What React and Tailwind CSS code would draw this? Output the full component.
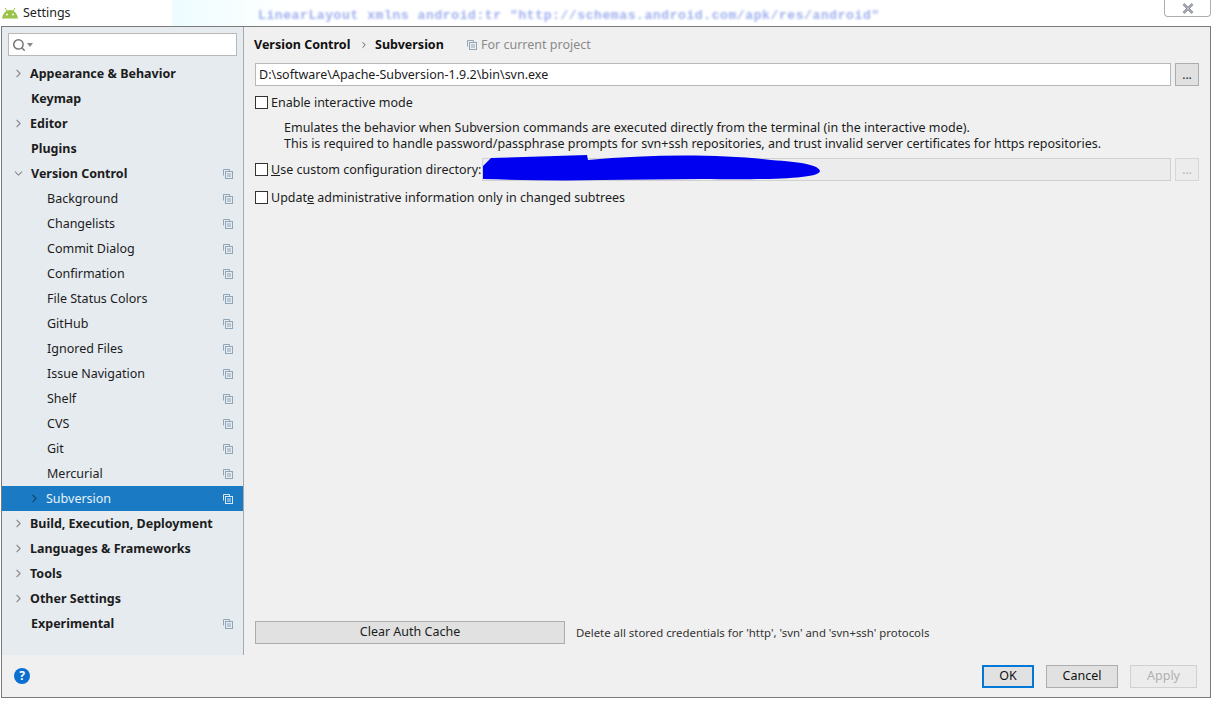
import { ChevronRight, ChevronDown, Search } from 'lucide-react';

const FONT = { fontFamily: '"Noto Sans", sans-serif' };

function CopyIcon({ light = false }) {
  const color = light ? '#dbe9f5' : '#8fa6b8';
  return (
    <svg width="10" height="10" viewBox="0 0 10 10" fill="none" stroke={color} strokeWidth="1">
      <path d="M0.5 6.5V0.5H6.5V2.5" />
      <rect x="2.5" y="2.5" width="7" height="7" />
      <path d="M4 5H8M4 7H8" />
    </svg>
  );
}

function Check({ children }) {
  return (
    <label className="flex items-center gap-[3px] whitespace-nowrap text-[12.5px] leading-[16px] text-[#1c1c1c]">
      <span className="h-[13px] w-[13px] shrink-0 border border-[#333] bg-white" />
      <span className="pt-[1px]">{children}</span>
    </label>
  );
}

function TreeRow({ label, bold, arrow, child, shared, selected }) {
  return (
    <div className={`flex h-[25px] items-center pr-[10px] text-[12.5px] ${selected ? 'bg-[#1a7bc4] text-[#e8f2fa]' : 'text-[#1c1c1c]'}`}>
      <span className={`flex shrink-0 items-center ${child ? 'w-[44px] pl-[26px]' : arrow ? 'w-[28px] pl-[10px]' : 'w-[29px]'}`}>
        {arrow === 'right' && <ChevronRight size={13} strokeWidth={2} className={selected ? 'text-[#14456b]' : 'text-[#8c8c8c]'} />}
        {arrow === 'down' && <ChevronDown size={13} strokeWidth={2} className="text-[#8c8c8c]" />}
      </span>
      <span className={`flex-1 whitespace-nowrap pt-[2px] ${bold ? 'font-bold' : ''} ${child && !selected ? 'pl-[1px]' : ''} ${arrow === 'down' ? 'pl-[1px]' : ''}`}>{label}</span>
      {shared && <CopyIcon light={selected} />}
    </div>
  );
}

const children = ['Background', 'Changelists', 'Commit Dialog', 'Confirmation', 'File Status Colors', 'GitHub', 'Ignored Files', 'Issue Navigation', 'Shelf', 'CVS', 'Git', 'Mercurial'];

function Sidebar() {
  return (
    <aside className="flex w-[242px] shrink-0 flex-col border-r border-[#a8a8a8] bg-[#e6ebf0]">
      <div className="mx-[6px] mt-[6px] mb-[5px] flex h-[23px] w-[229px] items-center gap-[1px] border border-[#b8b8b8] bg-white pl-[3px] text-[#777]">
        <Search size={14} strokeWidth={2.6} />
        <span className="h-0 w-0 border-x-[3px] border-t-[4px] border-x-transparent border-t-[#8a8a8a]" />
      </div>
      <TreeRow label="Appearance & Behavior" bold arrow="right" />
      <TreeRow label="Keymap" bold />
      <TreeRow label="Editor" bold arrow="right" />
      <TreeRow label="Plugins" bold />
      <TreeRow label="Version Control" bold arrow="down" shared />
      {children.map((name) => (
        <TreeRow key={name} label={name} child shared />
      ))}
      <TreeRow label="Subversion" child arrow="right" shared selected />
      <TreeRow label="Build, Execution, Deployment" bold arrow="right" />
      <TreeRow label="Languages & Frameworks" bold arrow="right" />
      <TreeRow label="Tools" bold arrow="right" />
      <TreeRow label="Other Settings" bold arrow="right" />
      <TreeRow label="Experimental" bold shared />
    </aside>
  );
}

function Browse({ disabled }) {
  return (
    <button className={`h-[23px] w-[24px] shrink-0 border text-[12px] leading-[14px] ${disabled ? 'border-[#d6d6d6] bg-[#ececec] text-[#b0b0b0]' : 'border-[#adadad] bg-[#e1e1e1] text-[#222]'}`}>
      ...
    </button>
  );
}

function Content() {
  return (
    <main className="flex min-w-0 flex-1 flex-col pl-[11px] pr-[11px] pb-[11px]">
      <div className="-ml-[1px] flex h-[36px] items-center text-[12.5px]">
        <span className="w-[101px] font-bold text-[#111]">Version Control</span>
        <ChevronRight size={10} className="mr-[6px] ml-[4px] text-[#444]" />
        <span className="w-[68px] font-bold text-[#111]">Subversion</span>
        <span className="ml-[24px] flex items-center gap-[4px] text-[#8a8a8a]">
          <CopyIcon />
          For current project
        </span>
      </div>
      <div className="flex gap-[4px]">
        <div className="flex h-[23px] flex-1 items-center border border-[#b8b8b8] bg-white px-[3px] pt-[1px] text-[12.5px] text-[#1c1c1c]">
          D:\software\Apache-Subversion-1.9.2\bin\svn.exe
        </div>
        <Browse />
      </div>
      <div className="mt-[8px]">
        <Check>Enable interactive mode</Check>
      </div>
      <div className="mt-[9px] ml-[29px] text-[12.5px] leading-[16px] text-[#1c1c1c]">
        <p>Emulates the behavior when Subversion commands are executed directly from the terminal (in the interactive mode).</p>
        <p>This is required to handle password/passphrase prompts for svn+ssh repositories, and trust invalid server certificates for https repositories.</p>
      </div>
      <div className="mt-[6px] flex items-center">
        <div className="w-[227px] shrink-0">
          <Check>
            <span className="underline">U</span>se custom configuration directory:
          </Check>
        </div>
        <div className="relative flex flex-1 gap-[4px]">
          <div className="h-[23px] flex-1 border border-[#d0d0d0] bg-[#ececec]" />
          <Browse disabled />
          <svg className="absolute -left-[1px] top-[-4px]" width="342" height="28" viewBox="0 0 342 28">
            <path d="M2 12 L10 4 L106 1 L107 6 C170 0 240 0 290 6 C320 8 338 11 339 17 C338 24 300 26 220 25 L120 26 C80 27 40 26 2 25 Z" fill="#0000f0" />
          </svg>
        </div>
      </div>
      <div className="mt-[8px]">
        <Check>
          Updat<span className="underline">e</span> administrative information only in changed subtrees
        </Check>
      </div>
      <div className="mt-auto flex items-center gap-[11px]">
        <button className="h-[23px] w-[310px] border border-[#adadad] bg-[#e1e1e1] text-[12.5px] text-[#1c1c1c]">Clear Auth Cache</button>
        <span className="text-[11.4px] text-[#333]">Delete all stored credentials for 'http', 'svn' and 'svn+ssh' protocols</span>
      </div>
    </main>
  );
}

function Footer() {
  return (
    <footer className="flex h-[42px] shrink-0 items-center justify-between pl-[12px] pr-[13px]">
      <span className="flex h-[16px] w-[16px] items-center justify-center rounded-full bg-[#0a6fd0] text-[12px] font-bold text-white">?</span>
      <div className="flex gap-[12px] text-[12.5px]">
        <button className="h-[23px] w-[52px] border-2 border-[#0078d7] bg-[#e1e1e1] text-[#111]">OK</button>
        <button className="h-[23px] w-[72px] border border-[#adadad] bg-[#e1e1e1] text-[#111]">Cancel</button>
        <button className="h-[23px] w-[67px] border border-[#d0d0d0] bg-[#ececec] text-[#b0b0b0]">Apply</button>
      </div>
    </footer>
  );
}

function TitleBar() {
  return (
    <header className="flex h-[26px] items-center bg-white">
      <svg className="ml-[2px]" width="16" height="11" viewBox="0 0 16 11" fill="#9bc24a">
        <path d="M0 10.5C1 5 4 2 8 2s7 3 8 8.5z" />
        <path d="M3 0l2 3M13 0l-2 3" stroke="#9bc24a" strokeWidth="1" />
        <circle cx="5" cy="6.5" r="1" fill="#fff" />
        <circle cx="11" cy="6.5" r="1" fill="#fff" />
      </svg>
      <span className="ml-[5px] w-[149px] shrink-0 text-[12.5px] text-[#222]">Settings</span>
      <div className="flex h-full flex-1 items-center bg-gradient-to-r from-[#eefcff] to-white to-[12%] pt-[5px] pl-[86px]">
        <span className="whitespace-nowrap text-[13px] font-bold tracking-[0.6px] text-[#9fb0f0] blur-[1.2px]" style={{ fontFamily: '"Liberation Mono", monospace' }}>
          LinearLayout xmlns android:tr "http://schemas.android.com/apk/res/android"
        </span>
      </div>
      <div className="mb-[10px] flex h-[17px] w-[47px] shrink-0 items-center justify-center rounded-b-[4px] border border-t-0 border-[#adadad] bg-white pt-[1px]">
        <svg width="12" height="11" viewBox="0 0 12 11" fill="none">
          <path d="M1.5 1L10.5 10M10.5 1L1.5 10" stroke="#5a6070" strokeWidth="2.4" />
          <path d="M1.5 1L10.5 10M10.5 1L1.5 10" stroke="#ffffff" strokeWidth="0.9" />
        </svg>
      </div>
    </header>
  );
}

export default function App() {
  return (
    <div className="flex h-[703px] w-[1211px] flex-col overflow-hidden bg-white" style={FONT}>
      <TitleBar />
      <div className="mb-[5px] ml-[1px] flex h-[672px] w-[1210px] flex-col border border-[#7a7a7a] bg-[#f0f0f0]">
        <div className="flex min-h-0 flex-1">
          <Sidebar />
          <Content />
        </div>
        <Footer />
      </div>
    </div>
  );
}
